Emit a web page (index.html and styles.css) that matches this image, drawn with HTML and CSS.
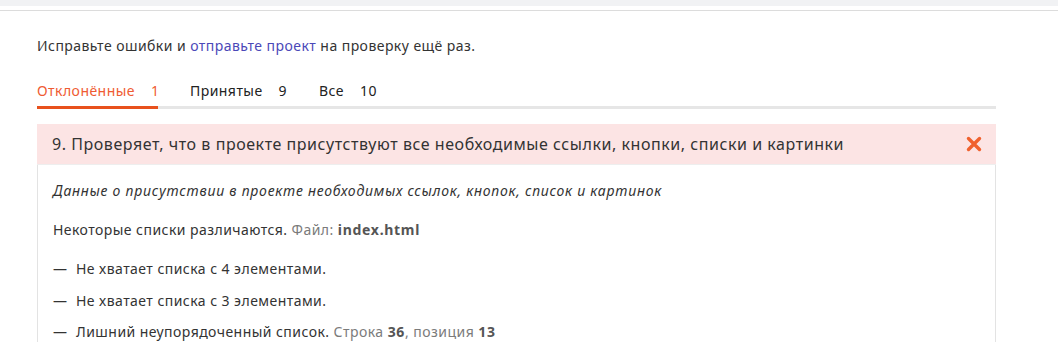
FILE: index.html
```html
<!DOCTYPE html>
<html lang="ru">
<head>
    <meta charset="UTF-8">
    <meta name="viewport" content="width=device-width, initial-scale=1.0">
    <title>Проверка проекта</title>
    <link rel="stylesheet" href="styles.css">
</head>
<body>
    <div class="topbar"></div>
    <div class="content">
        <p class="intro">Исправьте ошибки и <a href="#">отправьте проект</a> на проверку ещё раз.</p>

        <nav class="tabs">
            <a class="tab active" href="#">Отклонённые<span class="count">1</span></a>
            <a class="tab" href="#">Принятые<span class="count">9</span></a>
            <a class="tab" href="#">Все<span class="count">10</span></a>
        </nav>

        <div class="check-card">
            <div class="check-header">
                <h3>9. Проверяет, что в проекте присутствуют все необходимые ссылки, кнопки, списки и картинки</h3>
                <svg class="fail-icon" width="16" height="16" viewBox="0 0 16 16">
                    <path d="M2.5 2.5 L13.5 13.5 M13.5 2.5 L2.5 13.5" stroke="#f0612e" stroke-width="3.4" stroke-linecap="round"/>
                </svg>
            </div>
            <div class="check-body">
                <p class="check-desc">Данные о присутствии в проекте необходимых ссылок, кнопок, список и картинок</p>
                <p>Некоторые списки различаются. <span class="muted">Файл:</span> <b>index.html</b></p>
                <ul class="errors">
                    <li>Не хватает списка с 4 элементами.</li>
                    <li>Не хватает списка с 3 элементами.</li>
                    <li>Лишний неупорядоченный список. <span class="muted">Строка <b>36</b>, позиция <b>13</b></span></li>
                </ul>
            </div>
        </div>
    </div>
</body>
</html>
```

FILE: styles.css
```css
:root {
    --text-color: #333333;
    --muted-color: #7b7b7b;
    --accent-color: #e8511d;
    --link-color: #4b48b8;
    --border-color: #e3e3e3;
    --fail-bg: #fce4e4;
}

body {
    font-family: "Noto Sans", "Open Sans", Arial, sans-serif;
    color: var(--text-color);
    background-color: white;
    margin: 0;
    padding: 0;
    font-size: 14px;
    letter-spacing: 0.45px;
}

.topbar {
    height: 6px;
    background-color: #f1f2f4;
    border-bottom: 4px solid white;
    box-shadow: 0 1px 0 #dcdcdc;
    margin-bottom: 1px;
}

.content {
    width: 959px;
    margin-left: 37px;
}

.intro {
    margin: 26px 0 0 0;
    line-height: 20px;
}

.intro a {
    color: var(--link-color);
    text-decoration: none;
}

.tabs {
    display: flex;
    margin-top: 25px;
    border-bottom: 3px solid #e6e6e6;
}

.tab {
    color: #222222;
    text-decoration: none;
    line-height: 20px;
    padding-bottom: 5px;
    margin-right: 32px;
    margin-bottom: -3px;
    border-bottom: 3px solid transparent;
}

.tab .count {
    margin-left: 16px;
}

.tab.active {
    color: #ef5b32;
    border-bottom-color: var(--accent-color);
    width: 121px;
}

.check-card {
    margin-top: 15px;
    border: 1px solid var(--border-color);
    border-top: none;
    border-bottom: none;
}

.check-header {
    display: flex;
    align-items: center;
    justify-content: space-between;
    height: 40px;
    padding: 0 14px 0 15px;
    background-color: var(--fail-bg);
    margin: 0 -1px;
    border-bottom: 1px solid #eeeeee;
}

.check-header h3 {
    margin: 0;
    font-size: 16px;
    font-weight: normal;
    letter-spacing: 0.55px;
}

.fail-icon {
    display: block;
}

.check-body {
    padding: 16px 15px 0 15px;
}

.check-body p {
    margin: 0 0 19px 0;
    line-height: 20px;
}

.check-desc {
    font-style: italic;
    letter-spacing: 0.75px;
}

.muted {
    color: var(--muted-color);
}

.check-body b {
    color: #555555;
    letter-spacing: 0.7px;
}

.errors {
    list-style: none;
    margin: 0;
    padding: 0;
}

.errors li {
    line-height: 20px;
    margin-bottom: 11.5px;
    padding-left: 23px;
    position: relative;
}

.errors li::before {
    content: "—";
    position: absolute;
    left: 0;
}
```
